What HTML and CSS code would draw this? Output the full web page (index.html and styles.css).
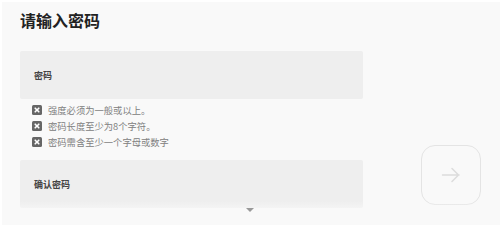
FILE: index.html
```html
<!DOCTYPE html>
<html lang="zh-CN">
<head>
<meta charset="UTF-8" />
<meta name="viewport" content="width=device-width, initial-scale=1" />
<title>请输入密码</title>
<link rel="stylesheet" href="styles.css">
</head>
<body>
<div class="page">
  <h1>请输入密码</h1>
  <div class="main">
    <div class="form">
      <div class="field">密码</div>
      <ul class="rules">
        <li><span class="bad"><svg width="10" height="10" viewBox="0 0 10 10"><path d="M3.2 3.2 L6.8 6.8 M6.8 3.2 L3.2 6.8" stroke="#fff" stroke-width="1.6" stroke-linecap="round"/></svg></span>强度必须为一般或以上。</li>
        <li><span class="bad"><svg width="10" height="10" viewBox="0 0 10 10"><path d="M3.2 3.2 L6.8 6.8 M6.8 3.2 L3.2 6.8" stroke="#fff" stroke-width="1.6" stroke-linecap="round"/></svg></span>密码长度至少为8个字符。</li>
        <li><span class="bad"><svg width="10" height="10" viewBox="0 0 10 10"><path d="M3.2 3.2 L6.8 6.8 M6.8 3.2 L3.2 6.8" stroke="#fff" stroke-width="1.6" stroke-linecap="round"/></svg></span>密码需含至少一个字母或数字</li>
      </ul>
      <div class="field">确认密码</div>
    </div>
    <button class="next" disabled>
      <svg width="20" height="16" viewBox="0 0 20 16"><path d="M1.5 8 H18 M11 1.5 L17.5 8 L11 14.5" fill="none" stroke="#dcdcdc" stroke-width="1.5" stroke-linecap="round" stroke-linejoin="round"/></svg>
    </button>
  </div>
  <div class="fade"><span class="caret"></span></div>
</div>
</body>
</html>
```

FILE: styles.css
```css
body {
  margin: 0;
  background: #fff;
  font-family: "Noto Sans CJK SC", "Noto Sans", sans-serif;
}
.page {
  position: relative;
  margin: 2px 0 0 2px;
  height: 223px;
  padding: 0 18px;
  background: #f9f9f9;
  overflow: hidden;
}
h1 {
  margin: 0;
  padding-top: 8px;
  font-size: 16px;
  line-height: 20px;
  font-weight: bold;
  color: #222;
}
.main {
  display: flex;
  margin-top: 21px;
}
.form {
  width: 343px;
}
.field {
  height: 48px;
  display: flex;
  align-items: center;
  padding-left: 14px;
  background: #eeeeee;
  border-radius: 2px;
  font-size: 9px;
  font-weight: bold;
  color: #444;
  box-sizing: border-box;
}
.rules {
  list-style: none;
  margin: 3px 0 10px;
  padding: 0 0 0 12px;
}
.rules li {
  display: flex;
  align-items: center;
  height: 16px;
  font-size: 9.3px;
  color: #808080;
}
.bad {
  display: flex;
  width: 10px;
  height: 10px;
  margin-right: 6px;
  background: #666;
  border-radius: 1.5px;
}
.next {
  align-self: flex-end;
  display: flex;
  align-items: center;
  justify-content: center;
  width: 60px;
  height: 60px;
  margin: 0 1px 3px auto;
  padding: 0;
  background: transparent;
  border: 1px solid #e4e4e4;
  border-radius: 14px;
}
.fade {
  position: absolute;
  left: 0;
  right: 0;
  bottom: 0;
  height: 24px;
  background: linear-gradient(rgba(249, 249, 249, 0), #f9f9f9 55%);
}
.caret {
  position: absolute;
  left: 244px;
  top: 7px;
  width: 0;
  height: 0;
  border-left: 4px solid transparent;
  border-right: 4px solid transparent;
  border-top: 4px solid #999;
}
```
